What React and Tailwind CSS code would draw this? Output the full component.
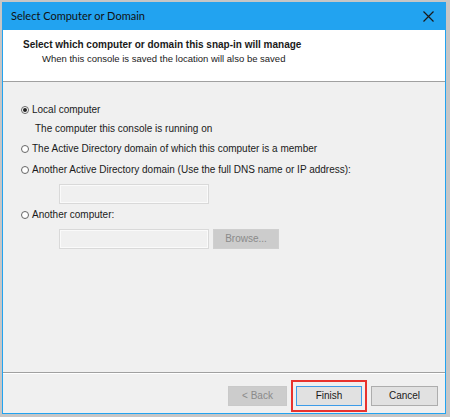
const Radio = ({ checked }) => (
  <span className="flex h-[8px] w-[8px] items-center justify-center rounded-full border border-[#666] bg-white">
    {checked && <span className="h-[4px] w-[4px] rounded-full bg-[#222]" />}
  </span>
);

const Option = ({ checked, label, className = "" }) => (
  <div className={"flex h-[12px] items-center gap-[3px] " + className}>
    <Radio checked={checked} />
    <span>{label}</span>
  </div>
);

const Field = () => (
  <div className="h-[20px] w-[150px] border border-[#d9d9d9] bg-[#f0f0f0] shadow-[inset_0_0_0_1px_#fafafa]" />
);

const App = () => {
  return (
    <div
      className="h-[417px] w-[450px] bg-[#c6c6c6] pb-[3px] pl-[2px] pr-[4px] pt-[2px] text-[10px] leading-[12px] text-[#1a1a1a]"
      style={{ fontFamily: '"Liberation Sans", Arial, sans-serif' }}
    >
      <div className="flex h-full flex-col border border-t-0 border-[#22a3f0] bg-[#f0f0f0]">
        <div className="flex h-[28px] shrink-0 items-center justify-between bg-[#22a3f0] pl-[8px] pr-[10px]">
          <span className="text-[11px] text-[#111]" style={{ fontFamily: 'Lato, "Noto Sans", sans-serif' }}>
            Select Computer or Domain
          </span>
          <svg width="11" height="11" viewBox="0 0 11 11" className="mr-[1px]">
            <path d="M0.5 0.5 L10.5 10.5 M10.5 0.5 L0.5 10.5" stroke="#1a1a1a" strokeWidth="1.2" />
          </svg>
        </div>

        <div className="h-[52px] shrink-0 border-b border-[#a0a0a0] bg-white pl-[20px] pt-[8px]">
          <div className="font-bold leading-[14px]">Select which computer or domain this snap-in will manage</div>
          <div className="pl-[19px] text-[9.5px] leading-[14px]">When this console is saved the location will also be saved</div>
        </div>

        <div className="flex-1 border-b border-[#a0a0a0] pl-[18px] pt-[22px]">
          <Option checked label="Local computer" />
          <div className="mt-[7px] pl-[14px]">The computer this console is running on</div>
          <Option className="mt-[8px]" label="The Active Directory domain of which this computer is a member" />
          <Option className="mt-[9px]" label="Another Active Directory domain (Use the full DNS name or IP address):" />
          <div className="mt-[8px] pl-[38px]">
            <Field />
          </div>
          <Option className="mt-[5px]" label="Another computer:" />
          <div className="mt-[8px] flex gap-[4px] pl-[38px]">
            <Field />
            <div className="flex h-[20px] w-[66px] items-center justify-center border border-[#cfcfcf] bg-[#cccccc] text-[#8a8a8a]">
              Browse...
            </div>
          </div>
        </div>

        <div className="flex h-[40px] shrink-0 items-start justify-end gap-[4px] border-t border-white pr-[7px] pt-[6px]">
          <div className="mt-[6px] flex h-[20px] w-[59px] items-center justify-center border border-[#c9c9c9] bg-[#cccccc] text-[#8a8a8a]">
            &lt; Back
          </div>
          <div className="border-2 border-[#e8322e] px-[3px] py-[4px]">
            <div className="flex h-[20px] w-[66px] items-center justify-center border border-[#3c9be8] bg-[#e1e1e1]">
              Finish
            </div>
          </div>
          <div className="mt-[6px] flex h-[20px] w-[67px] items-center justify-center border border-[#adadad] bg-[#e1e1e1]">
            Cancel
          </div>
        </div>
      </div>
    </div>
  );
};

export default App;
